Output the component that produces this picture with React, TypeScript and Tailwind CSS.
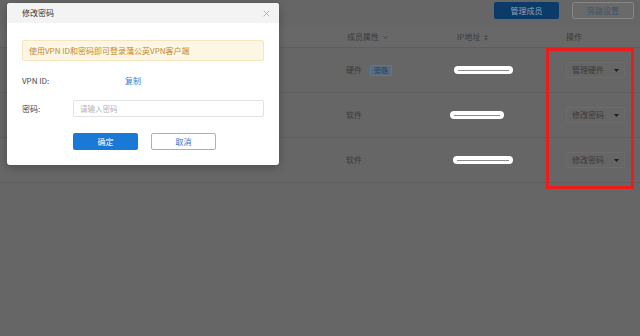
import React from "react";

const font = { fontFamily: '"Noto Sans CJK SC", "Noto Sans", sans-serif' };

function Pill({ w }: { w: number }) {
  return (
    <div
      className="h-[8px] rounded-full bg-white flex items-center px-[4px]"
      style={{ width: w }}
    >
      <div className="h-[1px] w-full bg-[#8a8a8a]" />
    </div>
  );
}

function Caret() {
  return (
    <svg width="5" height="3" viewBox="0 0 5 3">
      <path d="M0 0 L5 0 L2.5 3 Z" fill="#1e1e1e" />
    </svg>
  );
}

function OpButton({ label }: { label: string }) {
  return (
    <div className="w-[59px] h-[16px] border border-[#6c6c6c] bg-[#666] rounded-[2px] flex items-center justify-between pl-[5px] pr-[5px] text-[8px] text-[#3a3a3a]">
      <span>{label}</span>
      <Caret />
    </div>
  );
}

function Row({
  kind,
  tag,
  pillW,
  pillOffset,
  op,
}: {
  kind: string;
  tag?: boolean;
  pillW: number;
  pillOffset: number;
  op: string;
}) {
  return (
    <div className="h-[45px] border-b border-[#5e5e5e] flex items-center">
      <div className="w-[346px]" />
      <div className="w-[104px] flex items-center gap-[8px] text-[8px] text-[#3a3a3a]">
        <span>{kind}</span>
        {tag && (
          <span className="h-[11px] px-[3px] border border-[#557a9e] bg-[#5a6b7c] text-[#24466a] text-[7px] leading-[9px] rounded-[1px] flex items-center">
            旁路
          </span>
        )}
      </div>
      <div className="w-[116px] flex" style={{ paddingLeft: pillOffset }}>
        <Pill w={pillW} />
      </div>
      <OpButton label={op} />
    </div>
  );
}

export default function App() {
  return (
    <div
      className="relative w-[640px] h-[336px] overflow-hidden bg-[#666666]"
      style={font}
    >
      {/* background page */}
      <div className="flex flex-col">
        <div className="h-[27px] flex items-start justify-end pt-[2px] pr-[6px] gap-[13px]">
          <div className="w-[65px] h-[17px] rounded-[2px] bg-[#0c3a69] text-[#8fa3b8] text-[8px] flex items-center justify-center">
            管理成员
          </div>
          <div className="w-[62px] h-[17px] rounded-[2px] border border-[#868686] bg-[#6a6a6a] text-[#3e546b] text-[8px] flex items-center justify-center">
            旁路设置
          </div>
        </div>
        <div className="h-[21px] bg-[#686868] border-b border-[#5e5e5e] flex items-center text-[8px] text-[#3a3a3a]">
          <div className="w-[347px]" />
          <div className="w-[110px] flex items-center gap-[4px]">
            <span>成员属性</span>
            <svg width="5" height="3" viewBox="0 0 5 3">
              <path d="M0.5 0.5 L2.5 2.5 L4.5 0.5" stroke="#3a3a3a" strokeWidth="0.8" fill="none" />
            </svg>
          </div>
          <div className="w-[109px] flex items-center gap-[4px]">
            <span>IP地址</span>
            <svg width="4" height="7" viewBox="0 0 4 7">
              <path d="M0 3 L2 0.5 L4 3 Z M0 4 L2 6.5 L4 4 Z" fill="#4a4a4a" />
            </svg>
          </div>
          <span>操作</span>
        </div>
        <Row kind="硬件" tag pillW={59} pillOffset={4} op="管理硬件" />
        <Row kind="软件" pillW={54} pillOffset={0} op="修改密码" />
        <Row kind="软件" pillW={60} pillOffset={3} op="修改密码" />
      </div>

      {/* red annotation box */}
      <div className="absolute left-[546px] top-[48px] w-[88px] h-[141px] border-[3px] border-[#ea1c1c]" />

      {/* modal dialog */}
      <div className="absolute left-[7px] top-[3px] w-[272px] h-[162px] bg-white rounded-[3px] shadow-[0_2px_8px_rgba(0,0,0,0.25)] overflow-hidden flex flex-col">
        <div className="h-[20px] bg-[#f3f3f3] flex items-center justify-between pl-[15px] pr-[9px]">
          <span className="text-[8px] text-[#333]">修改密码</span>
          <svg width="7" height="7" viewBox="0 0 10 10">
            <path d="M1 1 L9 9 M9 1 L1 9" stroke="#aaa" strokeWidth="1.2" />
          </svg>
        </div>
        <div className="flex flex-col px-[15px] pt-[17px]">
          <div className="h-[21px] bg-[#fdf6e4] border border-[#f5e6bf] rounded-[2px] flex items-center pl-[6px] text-[8px] text-[#c08a30]">
            使用VPN ID和密码即可登录蒲公英VPN客户端
          </div>
          <div className="h-[15px] mt-[12px] flex items-center text-[8px] text-[#444]">
            <span className="w-[103px]">VPN ID:</span>
            <span className="text-[#2f80d0]">复制</span>
          </div>
          <div className="mt-[12px] flex items-center text-[8px] text-[#444]">
            <span className="w-[51px]">密码:</span>
            <div className="flex-1 h-[17px] border border-[#e2e2e2] rounded-[2px] flex items-center pl-[6px] text-[#b5b5b5] text-[7.5px]">
              请输入密码
            </div>
          </div>
          <div className="mt-[16px] flex items-center gap-[13px] pl-[51px]">
            <div className="w-[65px] h-[17px] rounded-[2px] bg-[#1a78d6] text-white text-[8px] flex items-center justify-center">
              确定
            </div>
            <div className="w-[65px] h-[17px] rounded-[2px] border border-[#8db6e2] bg-white text-[#1f75c9] text-[8px] flex items-center justify-center">
              取消
            </div>
          </div>
        </div>
      </div>
    </div>
  );
}
